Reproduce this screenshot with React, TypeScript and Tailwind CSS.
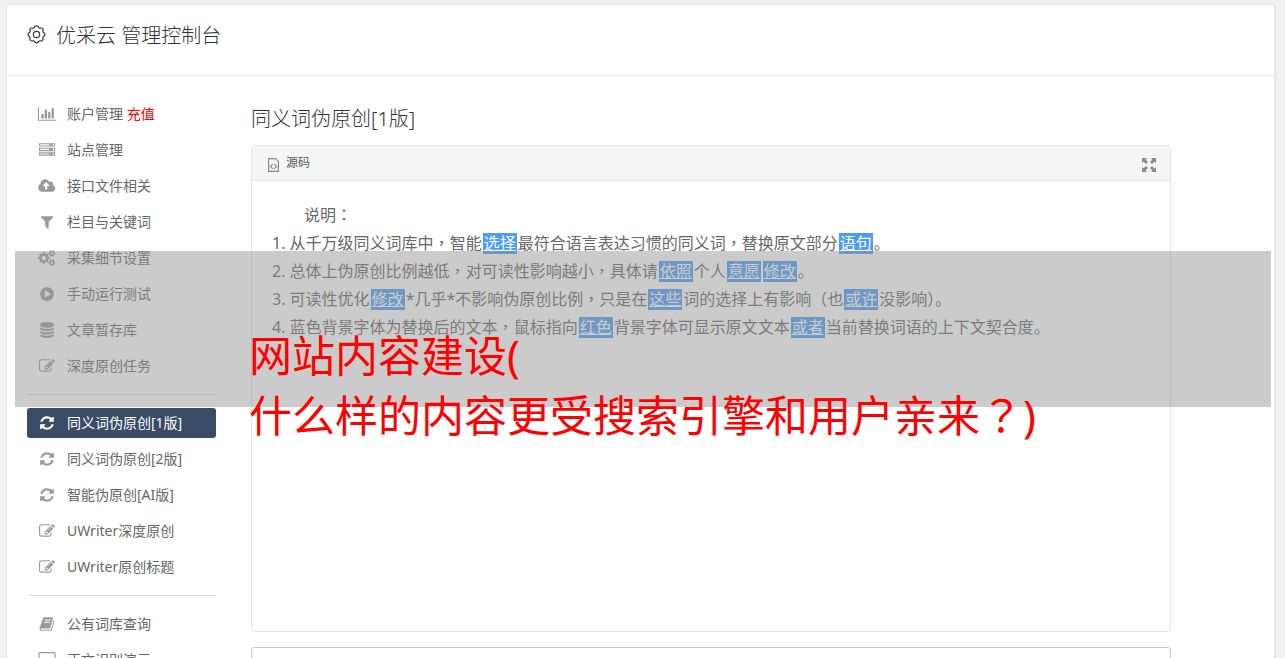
import React from "react";

type Glyph = { w: number; d: string };

const glyphs: Record<string, Glyph> = {
  chart: { w: 2048, d: "M640 896v512h-256v-512h256zm384-512v1024h-256v-1024h256zm1024 1152v128h-2048v-1536h128v1408h1920zm-640-896v768h-256v-768h256zm384-384v1152h-256v-1152h256z" },
  server: { w: 1792, d: "M128 1408h1024v-128h-1024v128zm0-512h1024v-128h-1024v128zm1568 448q0-40-28-68t-68-28-68 28-28 68 28 68 68 28 68-28 28-68zm-1568-960h1024v-128h-1024v128zm1568 448q0-40-28-68t-68-28-68 28-28 68 28 68 68 28 68-28 28-68zm0-512q0-40-28-68t-68-28-68 28-28 68 28 68 68 28 68-28 28-68zm96 832v384h-1792v-384h1792zm0-512v384h-1792v-384h1792zm0-512v384h-1792v-384h1792z" },
  cloud: { w: 1856, d: "M1216 864q0-14-9-23l-352-352q-9-9-23-9t-23 9l-351 351q-10 12-10 24 0 14 9 23t23 9h224v352q0 13 9.5 22.5t22.5 9.5h192q13 0 22.5-9.5t9.5-22.5v-352h224q13 0 22.5-9.5t9.5-22.5zm640 288q0 159-112.5 271.5t-271.5 112.5h-1088q-185 0-316.5-131.5t-131.5-316.5q0-130 70-240t188-165q-2-30-2-43 0-212 150-362t362-150q156 0 285.5 87t188.5 231q71-62 166-62 106 0 181 75t75 181q0 76-41 138 130 31 213.5 135.5t83.5 238.5z" },
  filter: { w: 1792, d: "M1595 295q17 41-14 70l-493 493v742q0 42-39 59-13 5-25 5-27 0-45-19l-256-256q-19-19-19-45v-486l-493-493q-31-29-14-70 17-39 59-39h1280q42 0 59 39z" },
  cogs: { w: 1856, d: "M832 896q0-106-75-181t-181-75-181 75-75 181 75 181 181 75 181-75 75-181zm768 512q0-52-38-90t-90-38-90 38-38 90q0 53 37.5 90.5t90.5 37.5 90.5-37.5 37.5-90.5zm0-1024q0-52-38-90t-90-38-90 38-38 90q0 53 37.5 90.5t90.5 37.5 90.5-37.5 37.5-90.5zm-384 421v185q0 10-7 19.5t-16 10.5l-155 24q-11 35-32 76 34 48 90 115 7 11 7 20 0 12-7 19-23 30-82.5 89.5t-78.5 59.5q-11 0-21-7l-115-90q-37 19-77 31-11 108-23 155-7 24-30 24h-186q-11 0-20-7.5t-10-17.5l-23-153q-34-10-75-31l-118 89q-7 7-20 7-11 0-21-8-144-133-144-160 0-9 7-19 10-14 41-53t47-61q-23-44-35-82l-152-24q-10-1-17-9.5t-7-19.5v-185q0-10 7-19.5t16-10.5l155-24q11-35 32-76-34-48-90-115-7-11-7-20 0-12 7-20 22-30 82-89t79-59q11 0 21 7l115 90q34-18 77-32 11-108 23-154 7-24 30-24h186q11 0 20 7.5t10 17.5l23 153q34 10 75 31l118-89q8-7 20-7 11 0 21 8 144 133 144 160 0 8-7 19-12 16-42 54t-45 60q23 48 34 82l152 23q10 2 17 10.5t7 19.5zm640 533v140q0 16-149 31-12 27-30 52 51 113 51 138 0 4-4 7-122 71-124 71-8 0-46-47t-52-68q-20 2-30 2t-30-2q-14 21-52 68t-46 47q-2 0-124-71-4-3-4-7 0-25 51-138-18-25-30-52-149-15-149-31v-140q0-16 149-31 13-29 30-52-51-113-51-138 0-4 4-7 4-2 35-20t59-34 30-16q8 0 46 46.5t52 67.5q20-2 30-2t30 2q51-71 92-112l6-2q4 0 124 70 4 3 4 7 0 25-51 138 17 23 30 52 149 15 149 31zm0-1024v140q0 16-149 31-12 27-30 52 51 113 51 138 0 4-4 7-122 71-124 71-8 0-46-47t-52-68q-20 2-30 2t-30-2q-14 21-52 68t-46 47q-2 0-124-71-4-3-4-7 0-25 51-138-18-25-30-52-149-15-149-31v-140q0-16 149-31 13-29 30-52-51-113-51-138 0-4 4-7 4-2 35-20t59-34 30-16q8 0 46 46.5t52 67.5q20-2 30-2t30 2q51-71 92-112l6-2q4 0 124 70 4 3 4 7 0 25-51 138 17 23 30 52 149 15 149 31z" },
  play: { w: 1792, d: "M896 128q209 0 385.5 103t279.5 279.5 103 385.5-103 385.5-279.5 279.5-385.5 103-385.5-103-279.5-279.5-103-385.5 103-385.5 279.5-279.5 385.5-103zm384 823q32-18 32-55t-32-55l-544-320q-31-19-64-1-32 19-32 56v640q0 37 32 56 16 8 32 8 17 0 32-9z" },
  database: { w: 1792, d: "M896 768q237 0 443-43t325-127v170q0 69-103 128t-280 93.5-385 34.5-385-34.5-280-93.5-103-128v-170q119 84 325 127t443 43zm0 768q237 0 443-43t325-127v170q0 69-103 128t-280 93.5-385 34.5-385-34.5-280-93.5-103-128v-170q119 84 325 127t443 43zm0-384q237 0 443-43t325-127v170q0 69-103 128t-280 93.5-385 34.5-385-34.5-280-93.5-103-128v-170q119 84 325 127t443 43zm0-1152q208 0 385 34.5t280 93.5 103 128v128q0 69-103 128t-280 93.5-385 34.5-385-34.5-280-93.5-103-128v-128q0-69 103-128t280-93.5 385-34.5z" },
  edit: { w: 1792, d: "M888 1184l116-116-152-152-116 116v56h96v96h56zm440-720q-16-16-33 1l-350 350q-17 17-1 33t33-1l350-350q17-17 1-33zm80 594v190q0 119-84.5 203.5t-203.5 84.5h-832q-119 0-203.5-84.5t-84.5-203.5v-832q0-119 84.5-203.5t203.5-84.5h832q63 0 117 25 15 7 18 23 3 17-9 29l-49 49q-14 14-32 8-23-6-45-6h-832q-66 0-113 47t-47 113v832q0 66 47 113t113 47h832q66 0 113-47t47-113v-126q0-13 9-22l64-64q15-15 35-7t20 29zm-96-738l288 288-672 672h-288v-288zm444 132l-92 92-288-288 92-92q28-28 68-28t68 28l152 152q28 28 28 68t-28 68z" },
  refresh: { w: 1792, d: "M1639 1056q0 5-1 7-64 268-268 434.5t-478 166.5q-146 0-282.5-55t-243.5-157l-129 129q-19 19-45 19t-45-19-19-45v-448q0-26 19-45t45-19h448q26 0 45 19t19 45-19 45l-137 137q71 66 161 102t187 36q134 0 250-65t186-179q11-17 53-117 8-23 30-23h192q13 0 22.5 9.5t9.5 22.5zm25-800v448q0 26-19 45t-45 19h-448q-26 0-45-19t-19-45 19-45l138-138q-148-137-349-137-134 0-250 65t-186 179q-11 17-53 117-8 23-30 23h-199q-13 0-22.5-9.5t-9.5-22.5v-7q65-268 270-434.5t480-166.5q146 0 284 55.5t245 156.5l130-129q19-19 45-19t45 19 19 45z" },
  book: { w: 1792, d: "M1703 478q40 57 18 129l-275 906q-19 64-76.5 107.5t-122.5 43.5h-923q-77 0-148.5-53.5t-99.5-131.5q-24-67-2-127 0-4 3-27t4-37q1-8-3-21.5t-3-19.5q2-11 8-21t16.5-23.5 16.5-23.5q23-38 45-91.5t30-91.5q3-10 .5-30t-.5-28q3-11 17-28t17-23q21-36 42-92t25-90q1-9-2.5-32t.5-28q4-13 22-30.5t22-22.5q19-26 42.5-84.5t27.5-96.5q1-8-3-25.5t-2-26.5q2-8 9-18t18-23 17-21q8-12 16.5-30.5t15-35 16-36 19.5-32 26.5-23.5 36-11.5 47.5 5.5l-1 3q38-9 51-9h761q74 0 114 56t18 130l-274 906q-36 119-71.5 153.5t-128.5 34.5h-869q-27 0-38 15-11 16-1 43 24 70 144 70h923q29 0 56-15.5t35-41.5l300-987q7-22 5-57 38 15 59 43zm-1064 2q-4 13 2 22.5t20 9.5h608q13 0 25.5-9.5t16.5-22.5l21-64q4-13-2-22.5t-20-9.5h-608q-13 0-25.5 9.5t-16.5 22.5zm-83 256q-4 13 2 22.5t20 9.5h608q13 0 25.5-9.5t16.5-22.5l21-64q4-13-2-22.5t-20-9.5h-608q-13 0-25.5 9.5t-16.5 22.5z" },
  desktop: { w: 1920, d: "M1792 992v-832q0-13-9.5-22.5t-22.5-9.5h-1600q-13 0-22.5 9.5t-9.5 22.5v832q0 13 9.5 22.5t22.5 9.5h1600q13 0 22.5-9.5t9.5-22.5zm128-832v1088q0 66-47 113t-113 47h-544q0 37 16 77.5t32 71 16 43.5q0 26-19 45t-45 19h-512q-26 0-45-19t-19-45q0-14 16-44t32-70 16-78h-544q-66 0-113-47t-47-113v-1088q0-66 47-113t113-47h1600q66 0 113 47t47 113z" },
};

function Icon({ name }: { name: string }) {
  const g = glyphs[name];
  return (
    <svg aria-hidden="true" viewBox={`0 0 ${g.w} 1792`} className="h-4 w-5 shrink-0" fill="currentColor">
      <path d={g.d} />
    </svg>
  );
}

type Item = { icon: string; label: string; extra?: string; active?: boolean };

const groups: Item[][] = [
  [
    { icon: "chart", label: "账户管理", extra: "充值" },
    { icon: "server", label: "站点管理" },
    { icon: "cloud", label: "接口文件相关" },
    { icon: "filter", label: "栏目与关键词" },
    { icon: "cogs", label: "采集细节设置" },
    { icon: "play", label: "手动运行测试" },
    { icon: "database", label: "文章暂存库" },
    { icon: "edit", label: "深度原创任务" },
  ],
  [
    { icon: "refresh", label: "同义词伪原创[1版]", active: true },
    { icon: "refresh", label: "同义词伪原创[2版]" },
    { icon: "refresh", label: "智能伪原创[AI版]" },
    { icon: "edit", label: "UWriter深度原创" },
    { icon: "edit", label: "UWriter原创标题" },
  ],
  [
    { icon: "book", label: "公有词库查询" },
    { icon: "desktop", label: "正文识别演示" },
  ],
];

function NavItem({ item }: { item: Item }) {
  return (
    <li>
      <a
        href="#"
        aria-current={item.active ? "page" : undefined}
        className={
          item.active
            ? "flex h-[30px] items-center gap-[10px] rounded-[3px] bg-[#3a4b66] pl-[10px] text-white"
            : "flex h-[30px] items-center gap-[10px] rounded-[3px] pl-[10px] text-[#666]"
        }
      >
        <span className={item.active ? "text-white" : "text-[#999]"}>
          <Icon name={item.icon} />
        </span>
        <span>
          {item.label}
          {item.extra && <span className="text-[#f00]"> {item.extra}</span>}
        </span>
      </a>
    </li>
  );
}

/* Replaced words are written between braces; wide punctuation is set centred in its cell. */
function RichText({ text }: { text: string }) {
  return (
    <>
      {text.split(/(\{[^}]+\}|[，：？])/).map((part, i) => {
        if (part.startsWith("{")) {
          return (
            <span key={i} className="mx-px inline-block bg-[#4a9cf5] px-px leading-[21px] text-white underline">
              {part.slice(1, -1)}
            </span>
          );
        }
        if (/^[，：？]$/.test(part)) {
          return (
            <span key={i} lang="zh-Hant" className="font-['Noto_Sans_CJK_TC',sans-serif] leading-none">
              {part}
            </span>
          );
        }
        return part;
      })}
    </>
  );
}

const notes = [
  "1. 从千万级同义词库中，智能{选择}最符合语言表达习惯的同义词，替换原文部分{语句}。",
  "2. 总体上伪原创比例越低，对可读性影响越小，具体请{依照}个人{意愿}{修改}。",
  "3. 可读性优化{修改}*几乎*不影响伪原创比例，只是在{这些}词的选择上有影响（也{或许}没影响）。",
  "4. 蓝色背景字体为替换后的文本，鼠标指向{红色}背景字体可显示原文文本{或者}当前替换词语的上下文契合度。",
];

export default function App() {
  return (
    <div
      lang="zh-CN"
      className="relative h-screen overflow-hidden bg-[#f1f1f1] pt-1 pr-[9px] pl-1.5 font-['Noto_Sans','Noto_Sans_CJK_SC',sans-serif] text-sm text-[#666]"
    >
      <div className="min-h-full rounded-t-[4px] border border-r-2 border-[#e5e5e5] bg-white">
        <header className="flex h-[71px] items-start gap-[10px] border-b border-[#e5e5e5] pt-4 pl-5 text-[#333]">
          <svg aria-hidden="true" viewBox="0 0 18 18" className="mt-1 size-[19px]" fill="none" stroke="currentColor" strokeWidth="1.1" strokeLinejoin="round">
            <path d="M7.400 1.200Q9 .4 10.600 1.200L11.200 2.700L12.700 3.100Q14.300 2.400 15 3.700Q15.700 4.600 14.900 5.700L15.400 7Q17 7.500 17 9Q17 10.500 15.400 11L14.900 12.300Q15.700 13.600 14.700 14.600Q13.600 15.600 12.300 14.900L11 15.400Q10.500 17 9 17Q7.500 17 7 15.400L5.700 14.900Q4.400 15.600 3.300 14.600Q2.300 13.600 3.100 12.300L2.600 11Q1 10.500 1 9Q1 7.500 2.600 7L3.100 5.700Q2.300 4.600 3 3.700Q3.700 2.400 5.300 3.100L6.800 2.700Z" />
            <circle cx="9" cy="9" r="3" />
          </svg>
          <h1 className="pt-px text-xl leading-7 font-light">优采云 管理控制台</h1>
        </header>
        <div className="flex gap-[35px] pr-[103px] pl-5">
          <nav className="w-[189px] shrink-0 pt-[23px]">
            {groups.map((items, i) => (
              <ul
                key={i}
                className={
                  i === 0
                    ? "flex flex-col gap-1.5"
                    : "mt-[13px] flex flex-col gap-1.5 border-t border-[#ddd] pt-[13px]"
                }
              >
                {items.map((item) => (
                  <NavItem key={item.label} item={item} />
                ))}
              </ul>
            ))}
          </nav>
          <main className="min-w-0 flex-1 pt-7">
            <h2 className="text-xl leading-[30px] font-light text-[#333]">同义词伪原创[1版]</h2>
            <section className="mt-[11px] min-h-[487px] rounded-[4px] border border-[#e5e5e5]">
              <div className="flex h-[35px] items-center justify-between rounded-t-[3px] border-b border-[#e5e5e5] bg-[#f5f5f5] pr-[14px] pl-4">
                <button className="flex items-center gap-[7px] text-xs text-[#555]">
                  <svg aria-hidden="true" viewBox="0 0 11 14" className="mt-1 h-[14px] w-[11px]" fill="none" stroke="#888" strokeWidth="1.200">
                    <path d="M.6.6h7l2.800 2.800v10H.6z" />
                    <path d="M4.700 6.200L2.500 8.500l2.200 2.300M6.300 6.200l2.200 2.300-2.200 2.300" />
                  </svg>
                  源码
                </button>
                <button aria-label="全屏" className="pt-1 text-[#888]">
                  <svg aria-hidden="true" viewBox="0 0 14 14" className="size-[14px]" fill="currentColor">
                    <path d="M0 0h5L3.500 1.500 6 4 4 6 1.500 3.500 0 5zM14 0v5l-1.500-1.500L10 6 8 4l2.500-2.500L9 0zM0 14V9l1.500 1.500L4 8l2 2-2.500 2.500L5 14zM14 14H9l1.500-1.500L8 10l2-2 2.500 2.500L14 9z" />
                  </svg>
                </button>
              </div>
              <div className="px-5 pt-5 text-base leading-7">
                <p className="indent-8">
                  <RichText text="说明：" />
                </p>
                {notes.map((note) => (
                  <p key={note}>
                    <RichText text={note} />
                  </p>
                ))}
              </div>
            </section>
            <textarea aria-label="原文" className="mt-[15px] block h-40 w-full resize-none rounded-[3px] border border-[#c8c8c8] bg-white" />
          </main>
        </div>
      </div>
      <div className="absolute top-[251px] right-[14px] left-[15px] h-[156px] bg-[#939393]/48 pl-[234px]">
        <p className="pt-[75px] text-[43px] leading-[60px] whitespace-nowrap text-[#f00]">
          网站内容建设(
          <br />
          <RichText text="什么样的内容更受搜索引擎和用户亲来？)" />
        </p>
      </div>
    </div>
  );
}
